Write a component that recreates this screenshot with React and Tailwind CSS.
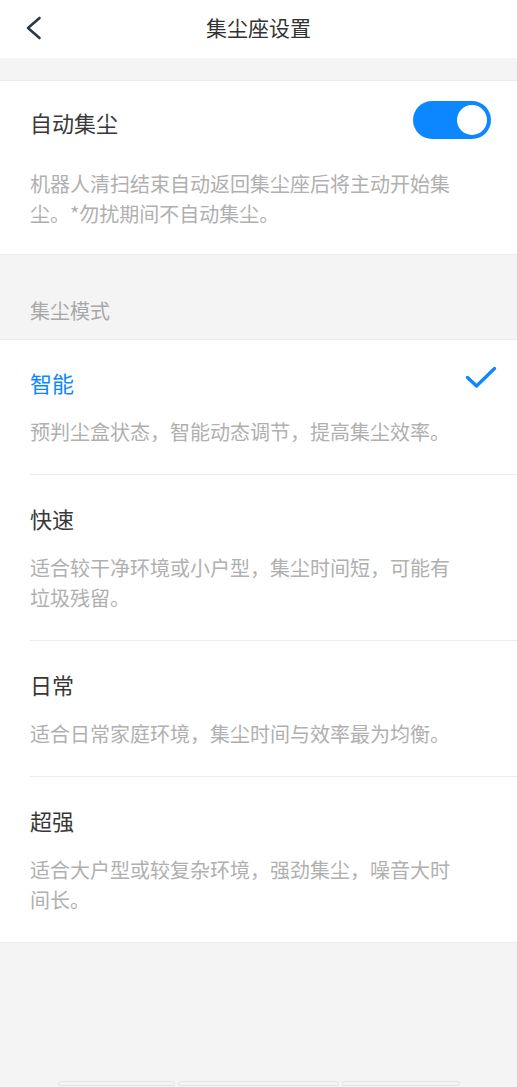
import { useState } from 'react';

const modes = [
  { key: 'smart', name: '智能', desc: '预判尘盒状态，智能动态调节，提高集尘效率。' },
  { key: 'fast', name: '快速', desc: '适合较干净环境或小户型，集尘时间短，可能有垃圾残留。' },
  { key: 'daily', name: '日常', desc: '适合日常家庭环境，集尘时间与效率最为均衡。' },
  { key: 'strong', name: '超强', desc: '适合大户型或较复杂环境，强劲集尘，噪音大时间长。' },
];

const App = () => {
  const [auto, setAuto] = useState(true);
  const [mode, setMode] = useState('smart');

  return (
    <div className="min-h-[1087px] flex flex-col bg-[#f4f4f4] font-['Noto_Sans_CJK_SC','Noto_Sans',sans-serif]">
      {/* header */}
      <div className="h-[58px] bg-white grid grid-cols-[60px_1fr_60px] items-center pb-[5px]">
        <button className="pl-[25px] pt-[2px] flex items-center">
          <svg width="17" height="24" viewBox="0 0 17 24" fill="none">
            <path d="M14.5 2 L3 12 L14.5 22" stroke="#2f3942" strokeWidth="2.6" strokeLinecap="round" strokeLinejoin="round" />
          </svg>
        </button>
        <h1 className="text-center text-[21px] leading-[30px] text-[#333]">集尘座设置</h1>
        <div />
      </div>

      <div className="h-[22px]" />

      {/* auto dust collection */}
      <div className="bg-white border-y border-[#ebebeb] pl-[30px] pr-[26px] pt-[20px] pb-[25px]">
        <div className="flex items-start justify-between">
          <span className="mt-[6px] text-[22px] leading-[30px] text-[#383838]">自动集尘</span>
          <button
            onClick={() => setAuto(!auto)}
            className={`w-[78px] h-[38px] rounded-full flex items-center px-[4px] ${auto ? 'bg-[#0d87ff] justify-end' : 'bg-[#e0e0e0] justify-start'}`}
          >
            <span className="w-[30px] h-[30px] rounded-full bg-white" />
          </button>
        </div>
        <p className="mt-[30px] max-w-[430px] text-[20px] leading-[30px] text-[#b0b0b0]">
          机器人清扫结束自动返回集尘座后将主动开始集尘。*勿扰期间不自动集尘。
        </p>
      </div>

      <div className="px-[30px] pt-[41px] pb-[13px] text-[20px] leading-[30px] text-[#a8a8a8]">集尘模式</div>

      {/* modes */}
      <div className="bg-white border-y border-[#ebebeb]">
        {modes.map((m, i) => (
          <div
            key={m.key}
            onClick={() => setMode(m.key)}
            className={`ml-[30px] pr-[20px] pb-[27px] ${i === 0 ? 'pt-[27px]' : 'pt-[28px]'} ${i < modes.length - 1 ? 'border-b border-[#ececec]' : ''}`}
          >
            <div className="flex items-start justify-between h-[30px]">
              <span className={`text-[22px] leading-[30px] ${mode === m.key ? 'text-[#0d87ff]' : 'text-[#383838]'}`}>{m.name}</span>
              {mode === m.key && (
                <svg className="-mt-[1px]" width="32" height="23" viewBox="0 0 32 23" fill="none">
                  <path d="M2.5 11.5 L11.5 20 L29.5 2.5" stroke="#0d87ff" strokeWidth="3.3" strokeLinecap="round" strokeLinejoin="round" />
                </svg>
              )}
            </div>
            <p className="mt-[20px] max-w-[430px] text-[20px] leading-[30px] text-[#b0b0b0]">{m.desc}</p>
          </div>
        ))}
      </div>

      {/* bottom bar remnants */}
      <div className="flex-1 flex items-end justify-center gap-[3px] pb-[1px]">
        <span className="w-[117px] h-[5px] rounded-full border border-[#e4e4e4]" />
        <span className="w-[161px] h-[5px] rounded-full border border-[#e4e4e4]" />
        <span className="w-[118px] h-[5px] rounded-full border border-[#e4e4e4]" />
      </div>
    </div>
  );
};

export default App;
